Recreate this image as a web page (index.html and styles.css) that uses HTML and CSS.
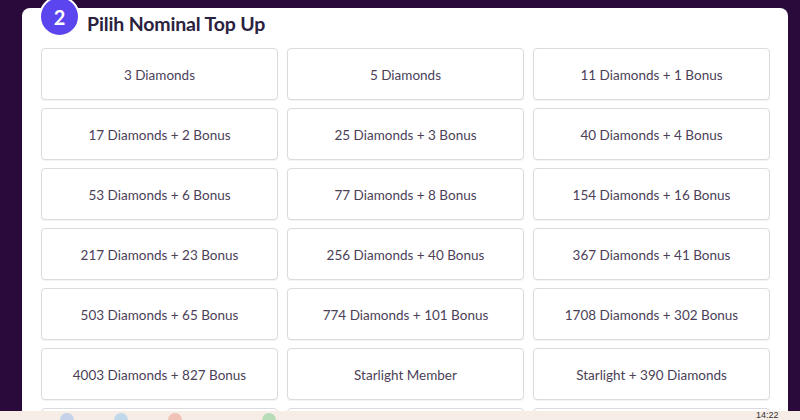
FILE: index.html
```html
<!DOCTYPE html>
<html lang="id">
<head>
<meta charset="utf-8">
<title>Pilih Nominal Top Up</title>
<link rel="stylesheet" href="styles.css">
</head>
<body>
<section class="card">
  <span class="step">2</span>
  <h2 class="title">Pilih Nominal Top Up</h2>
  <div class="grid">
    <button class="item">3 Diamonds</button>
    <button class="item">5 Diamonds</button>
    <button class="item">11 Diamonds + 1 Bonus</button>
    <button class="item">17 Diamonds + 2 Bonus</button>
    <button class="item">25 Diamonds + 3 Bonus</button>
    <button class="item">40 Diamonds + 4 Bonus</button>
    <button class="item">53 Diamonds + 6 Bonus</button>
    <button class="item">77 Diamonds + 8 Bonus</button>
    <button class="item">154 Diamonds + 16 Bonus</button>
    <button class="item">217 Diamonds + 23 Bonus</button>
    <button class="item">256 Diamonds + 40 Bonus</button>
    <button class="item">367 Diamonds + 41 Bonus</button>
    <button class="item">503 Diamonds + 65 Bonus</button>
    <button class="item">774 Diamonds + 101 Bonus</button>
    <button class="item">1708 Diamonds + 302 Bonus</button>
    <button class="item">4003 Diamonds + 827 Bonus</button>
    <button class="item">Starlight Member</button>
    <button class="item">Starlight + 390 Diamonds</button>
    <button class="item" aria-label="more"></button>
    <button class="item" aria-label="more"></button>
    <button class="item" aria-label="more"></button>
  </div>
</section>
<div class="taskbar">
  <span class="tb-icons">
    <i class="dot blue"></i><i class="dot lblue"></i><i class="dot red"></i><i class="dot green"></i>
  </span>
  <span class="clock">14:22</span>
</div>
</body>
</html>
```
FILE: styles.css
```css
* { box-sizing: border-box; }
html, body { margin: 0; padding: 0; }
body {
  background: #2a0a3b;
  font-family: Lato, "Open Sans", sans-serif;
  height: 420px;
  overflow: hidden;
}
.card {
  position: relative;
  margin: 8px 0 0 22px;
  width: 766px;
  background: #ffffff;
  border-radius: 8px;
  padding: 0 18px 20px 19px;
}
.step {
  position: absolute;
  left: 17px;
  top: -12px;
  width: 41px;
  height: 41px;
  border-radius: 50%;
  background: #5b45ef;
  border: 2px solid #ffffff;
  color: #ffffff;
  font-weight: 700;
  font-size: 20px;
  display: flex;
  align-items: center;
  justify-content: center;
}
.title {
  margin: 0;
  height: 40px;
  padding: 3px 0 0 46px;
  font-size: 19.5px;
  font-weight: 700;
  color: #2b2240;
  line-height: 26px;
  letter-spacing: -0.15px;
}
.grid {
  display: grid;
  grid-template-columns: repeat(3, 237px);
  column-gap: 9px;
  row-gap: 8px;
}
.item {
  height: 52px;
  background: #ffffff;
  border: 1px solid #dcdade;
  border-radius: 4px;
  box-shadow: 0 1px 1px rgba(0,0,0,0.05);
  font-family: Lato, "Open Sans", sans-serif;
  font-size: 13.5px;
  color: #4b3f58;
  padding: 2px 0 0;
  cursor: pointer;
}
.taskbar {
  position: fixed;
  left: 0;
  right: 0;
  bottom: 0;
  height: 9px;
  background: #f6ede7;
  overflow: hidden;
}
.tb-icons { position: absolute; left: 60px; top: 2px; display: flex; }
.dot { display: block; width: 14px; height: 14px; border-radius: 50%; opacity: 0.35; }
.dot.blue { background: #6aa0e8; margin-right: 40px; }
.dot.lblue { background: #5fb3f0; margin-right: 40px; }
.dot.red { background: #e8735a; margin-right: 80px; }
.dot.green { background: #41c060; }
.clock {
  position: absolute;
  left: 756px;
  top: 0;
  font-family: "Liberation Sans", sans-serif;
  font-size: 9px;
  color: #333;
  line-height: 9px;
}
```
